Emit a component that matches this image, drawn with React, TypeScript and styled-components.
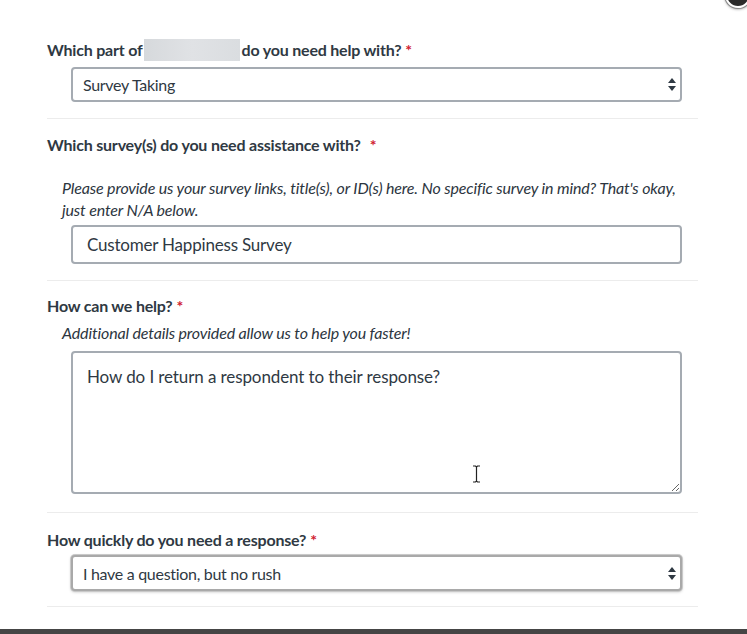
import React from 'react'
import styled, { createGlobalStyle } from 'styled-components'

const GlobalStyle = createGlobalStyle`
  html, body {
    margin: 0;
    padding: 0;
    background: #ffffff;
  }
  body {
    font-family: Lato, "Open Sans", "Liberation Sans", sans-serif;
    color: #2f3a45;
  }
`

const Page = styled.div`
  position: relative;
  width: 747px;
  height: 634px;
  overflow: hidden;
  background: #fff;
`

const CloseKnob = styled.div`
  position: absolute;
  top: -18px;
  right: -4px;
  width: 22px;
  height: 22px;
  border-radius: 50%;
  background: #2b2b2b;
  border: 2px solid #ffffff;
  box-shadow: 0 0 0 1px #8a8a8a, 0 1px 3px rgba(0, 0, 0, 0.5);
`

const Form = styled.div`
  width: 651px;
  padding: 39px 0 0 47px;
`

const Section = styled.section<{ $pb: number; $pt: number }>`
  padding-top: ${p => p.$pt}px;
  padding-bottom: ${p => p.$pb}px;
  border-bottom: 1px solid #ececec;
`

const Label = styled.div`
  font-size: 16px;
  font-weight: 700;
  line-height: 22px;
  color: #2f3943;
  letter-spacing: -0.2px;
  display: flex;
  align-items: center;
`

const Required = styled.span<{ $gap: number }>`
  color: #d0202f;
  margin-left: ${p => p.$gap}px;
  font-weight: 700;
`

const Redacted = styled.span`
  display: inline-block;
  width: 96px;
  height: 22px;
  margin: 0 2px 0 1px;
  background: linear-gradient(90deg, #d6d9dc 0%, #e0e2e5 50%, #dadde0 100%);
`

const Help = styled.p<{ $mt: number }>`
  margin: ${p => p.$mt}px 0 0 15px;
  font-size: 16px;
  font-style: italic;
  line-height: 22px;
  color: #2c3540;
  letter-spacing: -0.15px;
  padding-right: 16px;
`

const FieldWrap = styled.div<{ $mt: number }>`
  position: relative;
  margin: ${p => p.$mt}px 16px 0 24px;
`

const Select = styled.div<{ $focus?: boolean; $h: number }>`
  display: flex;
  align-items: center;
  justify-content: space-between;
  height: ${p => p.$h}px;
  box-sizing: border-box;
  padding: 0 4px 0 10px;
  border: 2px solid ${p => (p.$focus ? '#a9a9a9' : '#a5abb2')};
  border-radius: 4px;
  box-shadow: ${p => (p.$focus ? '0 0 0 1px #c9c9c9, 0 1px 3px rgba(0,0,0,0.25)' : 'none')};
  font-size: 16px;
  color: #2f3943;
  letter-spacing: -0.3px;
  background: #fff;
`

const TextInput = styled.div`
  height: 39px;
  box-sizing: border-box;
  display: flex;
  align-items: center;
  padding: 0 14px;
  border: 2px solid #a5abb2;
  border-radius: 4px;
  font-size: 17px;
  color: #2f3943;
  letter-spacing: -0.2px;
`

const TextArea = styled.textarea`
  display: block;
  width: 100%;
  height: 143px;
  box-sizing: border-box;
  padding: 12px 14px;
  border: 2px solid #a5abb2;
  border-radius: 4px;
  font-family: Lato, "Open Sans", "Liberation Sans", sans-serif;
  font-size: 17px;
  line-height: 24px;
  color: #2f3943;
  letter-spacing: -0.1px;
  resize: vertical;
  outline: none;
`

const Caret = styled.svg`
  position: absolute;
  left: 401px;
  top: 114px;
`

const BottomBar = styled.div`
  position: absolute;
  left: 0;
  right: 0;
  bottom: 0;
  height: 5px;
  background: #454545;
`

const Arrows = () => (
  <svg width="8" height="13" viewBox="0 0 8 13">
    <path d="M4 0 L8 5 L0 5 Z" fill="#2f3943" />
    <path d="M0 8 L8 8 L4 13 Z" fill="#2f3943" />
  </svg>
)

export default function App() {
  return (
    <Page>
      <GlobalStyle />
      <CloseKnob />
      <Form>
        <Section $pt={0} $pb={16}>
          <Label>
            Which part of<Redacted />do you need help with?<Required $gap={4}>*</Required>
          </Label>
          <FieldWrap $mt={6}>
            <Select $h={35}>
              <span>Survey Taking</span>
              <Arrows />
            </Select>
          </FieldWrap>
        </Section>

        <Section $pt={15} $pb={16}>
          <Label>
            Which survey(s) do you need assistance with?<Required $gap={9}>*</Required>
          </Label>
          <Help $mt={21}>
            Please provide us your survey links, title(s), or ID(s) here. No specific survey in mind? That's okay,
            just enter N/A below.
          </Help>
          <FieldWrap $mt={4}>
            <TextInput>Customer Happiness Survey</TextInput>
          </FieldWrap>
        </Section>

        <Section $pt={14} $pb={18}>
          <Label>
            How can we help?<Required $gap={4}>*</Required>
          </Label>
          <Help $mt={5}>Additional details provided allow us to help you faster!</Help>
          <FieldWrap $mt={7}>
            <TextArea readOnly defaultValue="How do I return a respondent to their response?" />
            <Caret width="9" height="18" viewBox="0 0 9 18">
              <path d="M1 1 H3.5 L4.5 2 L5.5 1 H8 M4.5 2 V16 M1 17 H3.5 L4.5 16 L5.5 17 H8" stroke="#222" strokeWidth="1.2" fill="none" />
            </Caret>
          </FieldWrap>
        </Section>

        <Section $pt={16} $pb={15}>
          <Label>
            How quickly do you need a response?<Required $gap={4}>*</Required>
          </Label>
          <FieldWrap $mt={4}>
            <Select $focus $h={36}>
              <span>I have a question, but no rush</span>
              <Arrows />
            </Select>
          </FieldWrap>
        </Section>
      </Form>
      <BottomBar />
    </Page>
  )
}
